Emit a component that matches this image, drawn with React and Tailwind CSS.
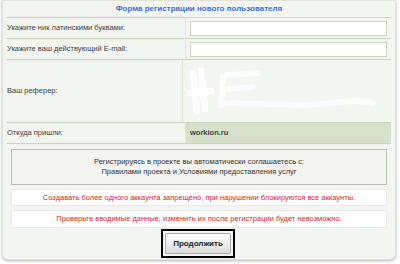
import React from 'react';

const Row = ({ label, children, tall, dark }) => (
    <div className={`flex border-b border-[#c9d4bc] ${tall ? 'h-[63px]' : 'h-[21px]'}`}>
        <div className="w-[179px] flex items-center border-r border-[#dfe6d6] text-[#3c3c3c]">{label}</div>
        <div className={`flex-1 flex items-center px-[4px] ${dark ? 'bg-[#d6e0cb]' : ''}`}>{children}</div>
    </div>
);

export default function App() {
    return (
        <div className="w-[400px] h-[264px] bg-white font-['Liberation_Sans',Arial,sans-serif] text-[7.5px]">
            <div className="mx-[2px] w-[394px] h-[260px] bg-[#f3f5f0] border border-[#dfe3da] rounded-b-[6px] shadow-[0_1px_3px_rgba(0,0,0,0.3)] px-[4px]">
                {/* Title */}
                <div className="h-[17px] flex items-center justify-center text-[#3b6fd1] font-bold text-[8px] border-b border-[#c9d4bc]">
                    Форма регистрации нового пользователя
                </div>

                <Row label="Укажите ник латинскими буквами:">
                    <div className="w-full h-[15px] bg-white border border-[#cbd6bf]" />
                </Row>
                <Row label="Укажите ваш действующий E-mail:">
                    <div className="w-full h-[15px] bg-white border border-[#cbd6bf]" />
                </Row>
                <Row label="Ваш реферер:" tall>
                    <svg width="200" height="56" viewBox="0 0 200 56" className="opacity-80">
                        <path d="M6 10 L10 48 M14 8 L18 46 M2 30 L24 28" stroke="#ffffff" strokeWidth="7" fill="none" strokeLinecap="round" />
                        <path d="M36 14 L34 42 M40 12 L70 10 M38 26 L66 24 M36 40 L120 42 L170 38 L186 40" stroke="#ffffff" strokeWidth="6" fill="none" strokeLinecap="round" />
                    </svg>
                </Row>
                <Row label="Откуда пришли:" dark>
                    <span className="text-[#444] font-bold">workion.ru</span>
                </Row>

                {/* Agreement */}
                <div className="mt-[5px] mx-[4px] h-[36px] border border-[#b9bdb3] bg-[#f4f5f1] flex flex-col items-center justify-center text-[#333] leading-[10px]">
                    <span>Регистрируясь в проекте вы автоматически соглашаетесь с:</span>
                    <span>Правилами проекта и Условиями предоставления услуг</span>
                </div>

                {/* Warnings */}
                <div className="mt-[4px] mx-[4px] h-[17px] border border-[#ece8e6] bg-white rounded-[2px] flex items-center justify-center text-[#d8222b]">
                    Создавать более одного аккаунта запрещено, при нарушении блокируются все аккаунты.
                </div>
                <div className="mt-[4px] mx-[4px] h-[18px] border border-[#ece8e6] bg-white rounded-[2px] flex items-center justify-center text-[#d8222b]">
                    Проверьте вводимые данные, изменить их после регистрации будет невозможно.
                </div>

                {/* Button */}
                <div className="mt-[1px] flex justify-center">
                    <div className="border-[2px] border-black p-[2px] ml-[-2px]">
                        <button className="h-[21px] px-[7px] bg-gradient-to-b from-[#ffffff] to-[#dcdcdc] border border-[#a9a9a9] rounded-[2px] text-[8px] font-bold text-[#222]">
                            Продолжить
                        </button>
                    </div>
                </div>
            </div>
        </div>
    );
}
